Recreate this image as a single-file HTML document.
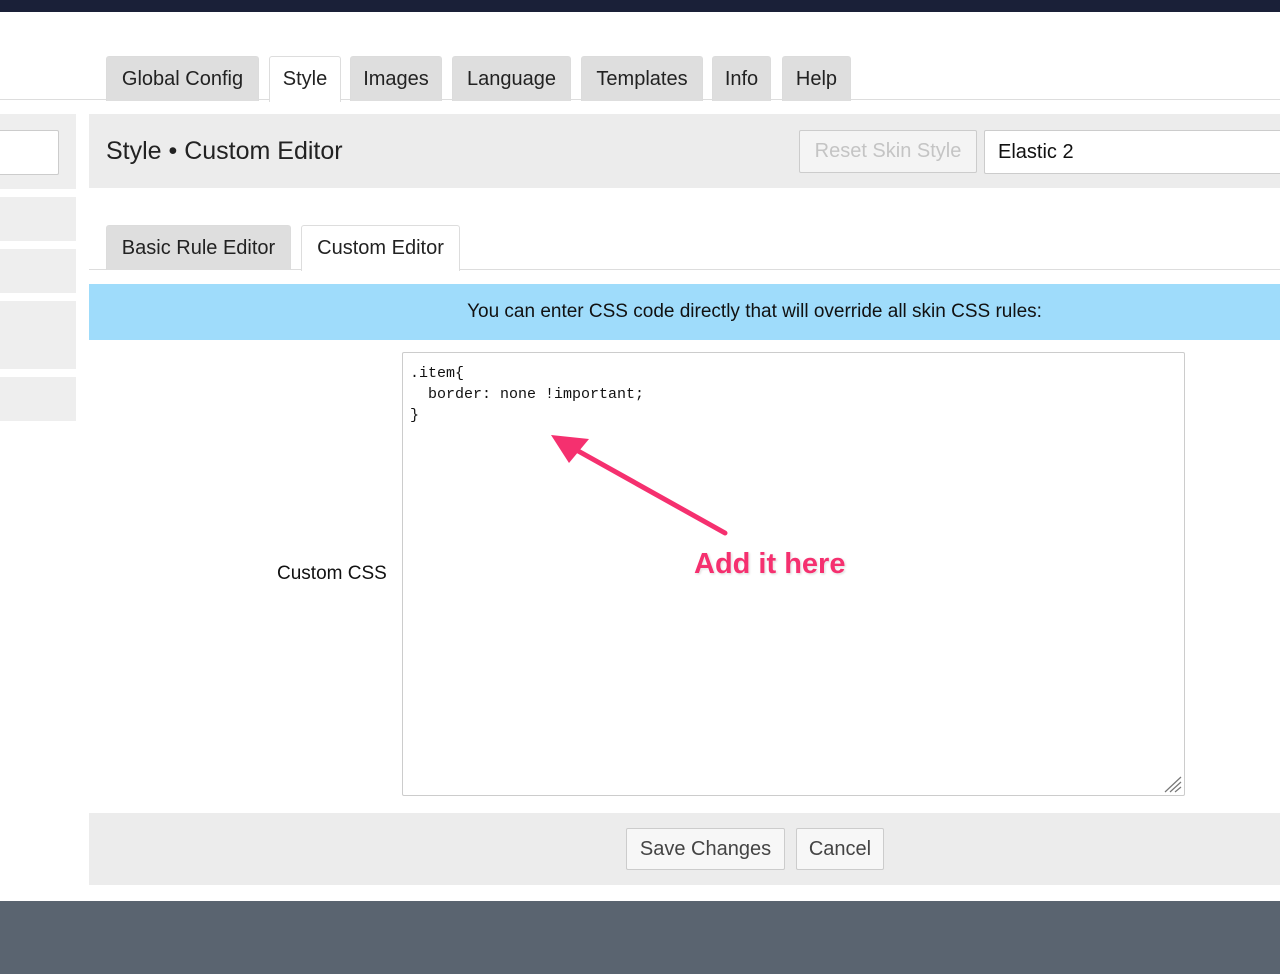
<!DOCTYPE html>
<html><head><meta charset="utf-8"><style>
*{box-sizing:border-box;margin:0;padding:0}
body{width:1280px;height:974px;position:relative;overflow:hidden;background:#fff;font-family:"Liberation Sans",sans-serif;color:#222}
.a{position:absolute}
.tab{position:absolute;top:56px;height:45px;background:#dedede;border:1px solid #dcdcdc;border-bottom:none;border-radius:3px 3px 0 0;font-size:20px;line-height:44px;text-align:center;color:#222}
.tab.on{background:#fff;border-color:#ddd}
.side{position:absolute;left:0;width:76px;background:#eeeeee}
.btn{position:absolute;background:#f7f7f7;border:1px solid #ccc;border-radius:2px;font-size:20px;text-align:center;color:#444}
</style></head><body>
<div class="a" style="left:0;top:0;width:1280px;height:12px;background:#1a2038"></div>

<div class="a" style="left:0;top:99px;width:1280px;height:1px;background:#ddd"></div>
<div class="tab" style="left:106px;width:153px">Global Config</div>
<div class="tab on" style="left:269px;width:72px;height:46px">Style</div>
<div class="tab" style="left:350px;width:92px">Images</div>
<div class="tab" style="left:452px;width:119px">Language</div>
<div class="tab" style="left:581px;width:122px">Templates</div>
<div class="tab" style="left:712px;width:59px">Info</div>
<div class="tab" style="left:782px;width:69px">Help</div>

<div class="side" style="top:114px;height:75px"></div>
<div class="a" style="left:-2px;top:130px;width:61px;height:45px;background:#fff;border:1px solid #ccc;border-radius:2px"></div>
<div class="side" style="top:197px;height:44px"></div>
<div class="side" style="top:249px;height:44px"></div>
<div class="side" style="top:301px;height:68px"></div>
<div class="side" style="top:377px;height:44px"></div>

<div class="a" style="left:89px;top:114px;width:1191px;height:74px;background:#ececec"></div>
<div class="a" style="left:106px;top:135px;font-size:25px;line-height:32px;color:#222">Style • Custom Editor</div>
<div class="btn" style="left:799px;top:130px;width:178px;height:43px;line-height:41px;color:#c4c4c4;background:#f4f4f4">Reset Skin Style</div>
<div class="a" style="left:984px;top:130px;width:300px;height:44px;background:#fff;border:1px solid #ccc;border-radius:2px;font-size:20px;line-height:42px;padding-left:13px;color:#111">Elastic 2</div>

<div class="a" style="left:89px;top:269px;width:1191px;height:1px;background:#ddd"></div>
<div class="tab" style="left:106px;top:225px;width:185px">Basic Rule Editor</div>
<div class="tab on" style="left:301px;top:225px;width:159px;height:46px">Custom Editor</div>

<div class="a" style="left:89px;top:284px;width:1191px;height:56px;background:#9fdcfb;font-size:19px;line-height:56px;text-align:center;padding-left:140px;color:#111">You can enter CSS code directly that will override all skin CSS rules:</div>

<div class="a" style="left:277px;top:563px;font-size:19px;color:#111">Custom CSS</div>
<div class="a" style="left:402px;top:352px;width:783px;height:444px;border:1px solid #ccc;background:#fff;border-radius:2px"></div>
<pre class="a" style="left:410px;top:363px;font-family:'Liberation Mono',monospace;font-size:15px;line-height:21px;color:#111">.item{
  border: none !important;
}</pre>
<svg class="a" style="left:1163px;top:776px" width="20" height="18"><path d="M2 16L18 1M7 16L18 6M12 16L18 11" stroke="#777" stroke-width="1.2"/></svg>

<svg class="a" style="left:545px;top:425px" width="200" height="120"><path d="M180 108L26 22" stroke="#f5306f" stroke-width="5" stroke-linecap="round"/><path d="M6 10L44 14L24 38Z" fill="#f5306f"/></svg>
<div class="a" style="left:694px;top:548px;font-size:29px;font-weight:bold;color:#f5306f;text-shadow:0 0 3px #fff,1px 1px 2px #ccc">Add it here</div>

<div class="a" style="left:89px;top:813px;width:1191px;height:72px;background:#ececec"></div>
<div class="btn" style="left:626px;top:828px;width:159px;height:42px;line-height:40px">Save Changes</div>
<div class="btn" style="left:796px;top:828px;width:88px;height:42px;line-height:40px">Cancel</div>

<div class="a" style="left:0;top:901px;width:1280px;height:73px;background:#5a6470"></div>
</body></html>
